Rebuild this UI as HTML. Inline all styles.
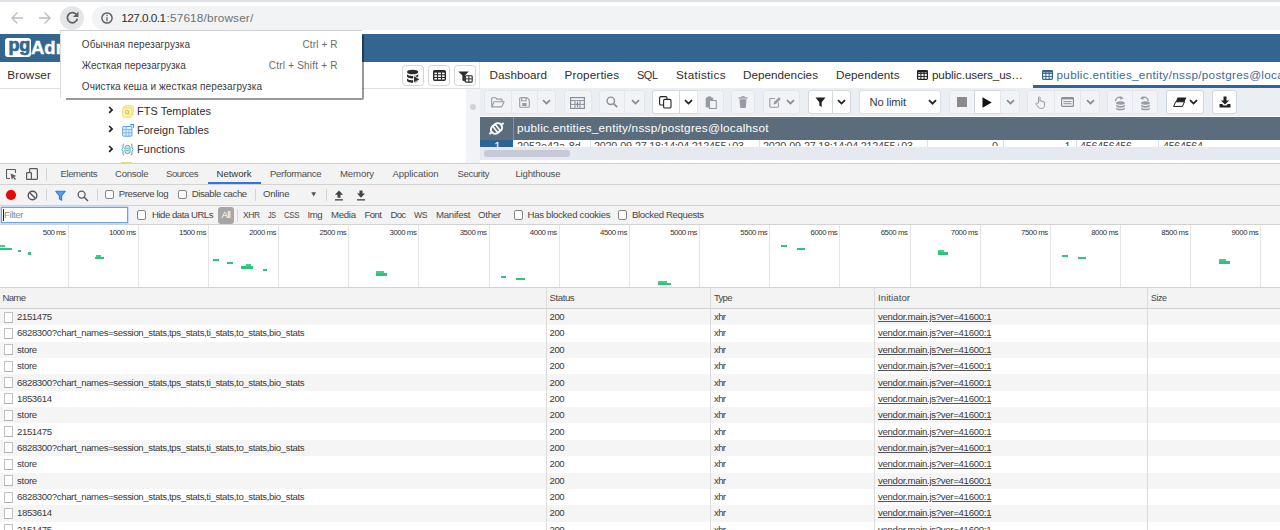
<!DOCTYPE html>
<html><head><meta charset="utf-8"><title>pgAdmin 4</title>
<style>
html,body{margin:0;padding:0;overflow:hidden;}
html{width:1280px;height:530px;}
body{width:1280px;height:530px;position:relative;overflow:hidden;background:#fff;font-family:"Liberation Sans", sans-serif;}
body>div,body>span,body>svg{position:absolute;display:block;}
body>span{white-space:pre;}
</style></head><body>
<div style="left:0px;top:0px;width:1280px;height:2.3px;background:#dee1e6;"></div>
<div style="left:0px;top:2.3px;width:1280px;height:31.7px;background:#ffffff;"></div>
<svg style="left:9px;top:10px;" width="16" height="16" viewBox="0 0 16 16"><path d="M14 7.3H4.7l4.2-4.2L8 2 2 8l6 6 .9-1.1-4.2-4.2H14z" fill="#bcbdbf"/></svg>
<svg style="left:37px;top:10px;" width="16" height="16" viewBox="0 0 16 16"><path d="M2 7.3h9.3L7.1 3.1 8 2l6 6-6 6-.9-1.1 4.2-4.2H2z" fill="#bcbdbf"/></svg>
<div style="left:60px;top:6px;width:24px;height:24px;background:#e5e6e7;border-radius:12px;"></div>
<svg style="left:64.8px;top:10.4px;" width="15" height="15" viewBox="0 0 16 16"><path d="M12.400 5.200A5.400 5.400 0 1 0 13.200 9.400" fill="none" stroke="#5f6368" stroke-width="1.900"/><path d="M14.300 1.600v5.800H8.500z" fill="#5f6368"/></svg>
<div style="left:92px;top:6px;width:1188px;height:24px;background:#f1f3f4;border-radius:12px 0 0 12px;"></div>
<svg style="left:99.6px;top:10.9px;" width="14" height="14" viewBox="0 0 14 14"><circle cx="7" cy="7" r="5.100" fill="none" stroke="#5f6368" stroke-width="1.500"/><rect x="6.35" y="6.2" width="1.3" height="4" fill="#5f6368"/><rect x="6.35" y="3.8" width="1.3" height="1.4" fill="#5f6368"/></svg>
<span style="top:10px;font-size:11.8px;line-height:17px;color:#303134;left:121.20px;letter-spacing:-0.550px;">127.0.0.1</span>
<span style="top:10px;font-size:11.8px;line-height:17px;color:#6e7276;left:166.60px;letter-spacing:0.142px;">:57618/browser/</span>
<div style="left:0px;top:33.75px;width:1280px;height:28.15px;background:#326690;"></div>
<div style="left:5px;top:37.5px;width:25.5px;height:19.5px;background:#ffffff;border-radius:3px;"></div>
<span style="top:33px;font-size:18px;line-height:25px;color:#326690;left:8.40px;font-weight:700;letter-spacing:-0.200px;-webkit-text-stroke:.7px #326690;">pg</span>
<span style="top:35px;font-size:18.5px;line-height:26px;color:#ffffff;left:31.00px;font-weight:700;-webkit-text-stroke:.4px #fff;">Admin</span>
<div style="left:0px;top:61.5px;width:480px;height:27px;background:#ffffff;"></div>
<div style="left:0px;top:88px;width:480px;height:1px;background:#dde0e6;"></div>
<span style="top:67px;font-size:11.7px;line-height:16px;color:#2e2e2e;left:7.30px;letter-spacing:0.121px;">Browser</span>
<div style="left:402.2px;top:65.3px;width:21.8px;height:20.4px;background:#ffffff;border:1px solid #d3d5da;border-radius:3.500px;box-sizing:border-box;"></div>
<div style="left:428.2px;top:65.3px;width:21.8px;height:20.4px;background:#ffffff;border:1px solid #d3d5da;border-radius:3.500px;box-sizing:border-box;"></div>
<div style="left:454px;top:65.3px;width:21.8px;height:20.4px;background:#ffffff;border:1px solid #d3d5da;border-radius:3.500px;box-sizing:border-box;"></div>
<svg style="left:406px;top:69px;" width="15" height="15" viewBox="0 0 15 15"><ellipse cx="6.600" cy="3" rx="5.600" ry="2.300" fill="#2b2b2b"/><path d="M1 4.700c0 3 11.200 3 11.200 0v2.500c0 3-11.200 3-11.200 0zM1 9c0 3 11.200 3 11.200 0v2.400c0 3-11.200 3-11.200 0z" fill="#2b2b2b"/><path d="M7.600 6.600l6.600 3.700-6.600 3.700z" fill="#2b2b2b" stroke="#fff" stroke-width=".9"/></svg>
<svg style="left:432.9px;top:69.8px;" width="13" height="11" viewBox="0 0 13 11"><rect x=".7" y=".7" width="11.600" height="9.600" rx="1.200" fill="#fff" stroke="#2b2b2b" stroke-width="1.400"/><path d="M.7 1.600h11.600" stroke="#2b2b2b" stroke-width="2"/><path d="M.7 4.700h11.600M.7 7.500h11.600M4.500 1v9.500M8.500 1v9.500" stroke="#2b2b2b" stroke-width="1.100"/></svg>
<svg style="left:457.8px;top:70.8px;" width="15" height="12" viewBox="0 0 15 12"><path d="M.3 .4h10.400L6.900 4.600v6L4.400 9.400V4.600z" fill="#2b2b2b"/><rect x="7.400" y="4.700" width="6.800" height="6.400" rx=".8" fill="#fff" stroke="#2b2b2b" stroke-width="1.100"/><path d="M7.400 7.900h6.800M10.800 4.700v6.400" stroke="#2b2b2b" stroke-width="1"/></svg>
<div style="left:479.3px;top:61.9px;width:1px;height:101px;background:#e6e8ec;"></div>
<div style="left:0px;top:89px;width:466px;height:74px;background:#ffffff;"></div>
<div style="left:466.25px;top:89px;width:13.5px;height:74px;background:#f2f3f7;"></div>
<div style="left:469.5px;top:104px;width:6px;height:6px;background:#cfd2d8;border-radius:3px;"></div>
<svg style="left:108px;top:106.39999999999999px;" width="6" height="8" viewBox="0 0 6 8"><path d="M1.100 1l3 2.900L1.100 6.800" fill="none" stroke="#222" stroke-width="1.700"/></svg>
<span style="top:104px;font-size:10.9px;line-height:15px;color:#2e2e2e;left:137.00px;letter-spacing:0.079px;">FTS Templates</span>
<svg style="left:108px;top:125.39999999999999px;" width="6" height="8" viewBox="0 0 6 8"><path d="M1.100 1l3 2.900L1.100 6.800" fill="none" stroke="#222" stroke-width="1.700"/></svg>
<span style="top:123px;font-size:10.9px;line-height:15px;color:#2e2e2e;left:137.00px;letter-spacing:0.058px;">Foreign Tables</span>
<svg style="left:108px;top:144.8px;" width="6" height="8" viewBox="0 0 6 8"><path d="M1.100 1l3 2.900L1.100 6.800" fill="none" stroke="#222" stroke-width="1.700"/></svg>
<span style="top:142px;font-size:10.9px;line-height:15px;color:#2e2e2e;left:137.00px;letter-spacing:0.098px;">Functions</span>
<svg style="left:122px;top:104.5px;" width="12" height="13" viewBox="0 0 12 13"><rect x="2.2" y=".7" width="9" height="9.4" rx="1.5" fill="#fcf5ad" stroke="#ebdf78" stroke-width="1"/><rect x=".7" y="2.6" width="9" height="9.6" rx="1.5" fill="#fcf5ad" stroke="#ebdf78" stroke-width="1"/><circle cx="5" cy="7" r="1.7" fill="none" stroke="#d8b93a" stroke-width=".9"/><path d="M6.2 8.3l1.5 1.6" stroke="#d8b93a" stroke-width=".9"/></svg>
<svg style="left:122px;top:124px;" width="12" height="13" viewBox="0 0 12 13"><rect x=".7" y="2.400" width="9.200" height="9.800" rx="1" fill="#e2f0ff" stroke="#5a9fe6" stroke-width="1"/><path d="M.7 5.600h9.200M.7 8.800h9.200M4 2.400v9.800M7 5.600v6.600" stroke="#6aa9ea" stroke-width=".8"/><path d="M8.200 .6h3.200v3.200" fill="none" stroke="#3d8fe0" stroke-width="1.100"/></svg>
<svg style="left:121px;top:142.5px;" width="13" height="13" viewBox="0 0 13 13"><path d="M3 .8C1.6 .8 2.2 3.2 2 4.6 1.9 5.6 .8 6 .8 6.5s1.1.9 1.2 1.9c.2 1.4-.4 3.8 1 3.8M10 .8c1.4 0 .8 2.4 1 3.8.1 1 1.2 1.4 1.2 1.9s-1.1.9-1.2 1.9c-.2 1.4.4 3.8-1 3.800" fill="none" stroke="#3d9aa8" stroke-width="1"/><rect x="4" y="2.4" width="5" height="8.2" rx="2.3" fill="#d6f1f4" stroke="#3d9aa8" stroke-width=".9"/><path d="M5.3 5.3h2.4M5.3 7.6h2.4" stroke="#3d9aa8" stroke-width=".8"/></svg>
<div style="left:121px;top:161.6px;width:11px;height:1.4px;background:#dfe27a;"></div>
<div style="left:480px;top:61.5px;width:800px;height:26.5px;background:#ffffff;"></div>
<span style="top:67px;font-size:11.7px;line-height:16px;color:#2e2e2e;left:489.50px;letter-spacing:0.039px;">Dashboard</span>
<span style="top:67px;font-size:11.7px;line-height:16px;color:#2e2e2e;left:564.50px;letter-spacing:0.135px;">Properties</span>
<span style="top:67px;font-size:11.7px;line-height:16px;color:#2e2e2e;left:637.00px;letter-spacing:-0.450px;transform:scaleX(0.9337);transform-origin:0 50%;">SQL</span>
<span style="top:67px;font-size:11.7px;line-height:16px;color:#2e2e2e;left:676.00px;letter-spacing:0.304px;">Statistics</span>
<span style="top:67px;font-size:11.7px;line-height:16px;color:#2e2e2e;left:743.00px;letter-spacing:0.024px;">Dependencies</span>
<span style="top:67px;font-size:11.7px;line-height:16px;color:#2e2e2e;left:836.00px;letter-spacing:0.050px;">Dependents</span>
<svg style="left:917px;top:70px;" width="11" height="10" viewBox="0 0 11 10"><rect x=".6" y=".6" width="9.800" height="8.800" rx=".8" fill="none" stroke="#222" stroke-width="1.200"/><path d="M.6 1.500h9.800" stroke="#222" stroke-width="1.900"/><path d="M.6 3.4h9.8M.6 6.4h9.8M3.9 .6v8.800M7.1 .6v8.8" stroke="#222" stroke-width="1"/></svg>
<span style="top:67px;font-size:11.7px;line-height:16px;color:#2e2e2e;left:932.00px;letter-spacing:-0.127px;">public.users_us…</span>
<svg style="left:1041.5px;top:70px;" width="11" height="10" viewBox="0 0 11 10"><rect x=".6" y=".6" width="9.800" height="8.800" rx=".8" fill="none" stroke="#326690" stroke-width="1.200"/><path d="M.6 1.500h9.800" stroke="#326690" stroke-width="1.900"/><path d="M.6 3.4h9.8M.6 6.4h9.8M3.9 .6v8.800M7.1 .6v8.8" stroke="#326690" stroke-width="1"/></svg>
<span style="top:67px;font-size:11.7px;line-height:16px;color:#3a6c95;left:1056.50px;letter-spacing:0.316px;">public.entities_entity/nssp/postgres@localhsot</span>
<div style="left:1032.5px;top:85.1px;width:248px;height:3px;background:#326690;"></div>
<div style="left:480px;top:88.2px;width:800px;height:28.3px;background:#ebeef3;"></div>
<div style="left:484.2px;top:90.2px;width:27.8px;height:24.3px;background:#f1f3f7;border:1px solid #e3e6eb;box-sizing:border-box;border-radius:3px 0px 0px 3px;"></div>
<div style="left:510.7px;top:90.2px;width:27.3px;height:24.3px;background:#f1f3f7;border:1px solid #e3e6eb;box-sizing:border-box;border-radius:0px 0px 0px 0px;"></div>
<div style="left:536.7px;top:90.2px;width:19.6px;height:24.3px;background:#f1f3f7;border:1px solid #e3e6eb;box-sizing:border-box;border-radius:0px 3px 3px 0px;"></div>
<svg style="left:491px;top:96.5px;" width="14" height="11" viewBox="0 0 14 11"><path d="M.7 9.8V1.6c0-.5.4-.9.900-.9h3l1.200 1.400h4.400c.5 0 .9.4.9.900v1.200M.8 9.900l2.300-5.200h10l-2.300 5.200z" fill="none" stroke="#979ba3" stroke-width="1.1" stroke-linejoin="round"/></svg>
<svg style="left:518.5px;top:96.5px;" width="11" height="11" viewBox="0 0 11 11"><path d="M.7 1.600c0-.5.4-.9.900-.9h6.400l2.300 2.300v6.400c0 .5-.4.9-.9.900H1.600c-.5 0-.9-.4-.9-.9z" fill="none" stroke="#979ba3" stroke-width="1.1"/><rect x="2.600" y=".8" width="4.600" height="3" fill="none" stroke="#979ba3" stroke-width="1"/><rect x="3.200" y="6" width="4.400" height="3" fill="#979ba3"/></svg>
<svg style="left:542px;top:99px;" width="9" height="6" viewBox="0 0 9 6"><path d="M1 1.200l3.500 3.400L8 1.200" fill="none" stroke="#878c94" stroke-width="1.800"/></svg>
<div style="left:563.7px;top:90.2px;width:28.6px;height:24.3px;background:#f1f3f7;border:1px solid #e3e6eb;box-sizing:border-box;border-radius:3px 3px 3px 3px;"></div>
<svg style="left:570px;top:96.5px;" width="15" height="12" viewBox="0 0 15 12"><rect x=".6" y=".6" width="13.800" height="10.800" fill="none" stroke="#8b9098" stroke-width="1.2"/><path d="M.6 3.600h13.800M.6 7.400h13.800M5 3.600v7.800M10 3.600v7.800" stroke="#8b9098" stroke-width="1"/><path d="M7.500 4.800v5.400M5.600 7.400h3.800" stroke="#8b9098" stroke-width="1.200"/></svg>
<div style="left:599.2px;top:90.2px;width:26.3px;height:24.3px;background:#f1f3f7;border:1px solid #e3e6eb;box-sizing:border-box;border-radius:3px 0px 0px 3px;"></div>
<div style="left:624.2px;top:90.2px;width:21.1px;height:24.3px;background:#f1f3f7;border:1px solid #e3e6eb;box-sizing:border-box;border-radius:0px 3px 3px 0px;"></div>
<svg style="left:606px;top:96px;" width="12" height="12" viewBox="0 0 12 12"><circle cx="4.800" cy="4.800" r="3.700" fill="none" stroke="#8b9098" stroke-width="1.400"/><path d="M7.600 7.600l3.600 3.600" stroke="#8b9098" stroke-width="1.700"/></svg>
<svg style="left:630.5px;top:99px;" width="9" height="6" viewBox="0 0 9 6"><path d="M1 1.200l3.500 3.400L8 1.200" fill="none" stroke="#878c94" stroke-width="1.800"/></svg>
<div style="left:651.7px;top:90.2px;width:28.3px;height:24.3px;background:#ffffff;border:1px solid #d3d7de;box-sizing:border-box;border-radius:3px 0px 0px 3px;"></div>
<div style="left:678.7px;top:90.2px;width:19.8px;height:24.3px;background:#ffffff;border:1px solid #d3d7de;box-sizing:border-box;border-radius:0px 0px 0px 0px;"></div>
<div style="left:697.2px;top:90.2px;width:27.1px;height:24.3px;background:#f1f3f7;border:1px solid #e3e6eb;box-sizing:border-box;border-radius:0px 3px 3px 0px;"></div>
<svg style="left:659.2px;top:96px;" width="13" height="13" viewBox="0 0 13 13"><rect x=".6" y=".6" width="7.400" height="8.400" rx="1.300" fill="#fff" stroke="#222" stroke-width="1.100"/><rect x="4.600" y="3.400" width="7.400" height="8.600" rx="1.300" fill="#fff" stroke="#222" stroke-width="1.100"/></svg>
<svg style="left:684px;top:99px;" width="9" height="6" viewBox="0 0 9 6"><path d="M1 1.200l3.500 3.400L8 1.200" fill="none" stroke="#222222" stroke-width="1.800"/></svg>
<svg style="left:705px;top:95.5px;" width="12" height="13" viewBox="0 0 12 13"><rect x=".7" y="1.500" width="7.500" height="10" rx="1" fill="#979ba3"/><rect x="4.500" y="4.500" width="6.800" height="8" fill="#f1f3f7" stroke="#979ba3" stroke-width="1.100"/><rect x="2.600" y=".4" width="3.600" height="2" fill="#979ba3"/></svg>
<div style="left:730.7px;top:90.2px;width:24.6px;height:24.3px;background:#f1f3f7;border:1px solid #e3e6eb;box-sizing:border-box;border-radius:3px 3px 3px 3px;"></div>
<svg style="left:738px;top:96px;" width="10" height="12" viewBox="0 0 10 12"><path d="M1.500 3.200h7l-.6 8c0 .4-.4.700-.8.700H2.900c-.4 0-.8-.3-.8-.7z" fill="#979ba3"/><rect x=".5" y="1.300" width="9" height="1.300" fill="#979ba3"/><rect x="3.300" y=".2" width="3.400" height="1.400" fill="#979ba3"/></svg>
<div style="left:762.7px;top:90.2px;width:37.6px;height:24.3px;background:#f1f3f7;border:1px solid #e3e6eb;box-sizing:border-box;border-radius:3px 3px 3px 3px;"></div>
<svg style="left:769px;top:96px;" width="12" height="12" viewBox="0 0 12 12"><path d="M9.500 6.500v3.800c0 .5-.4.900-.9.900H1.700c-.5 0-.9-.4-.9-.9V3.400c0-.5.4-.9.900-.9h4.300" fill="none" stroke="#979ba3" stroke-width="1.100"/><path d="M4.500 8.500l.5-2.400L10 1.200l1.800 1.800-4.900 5z" fill="#979ba3"/></svg>
<svg style="left:785.5px;top:99px;" width="9" height="6" viewBox="0 0 9 6"><path d="M1 1.200l3.500 3.400L8 1.200" fill="none" stroke="#878c94" stroke-width="1.800"/></svg>
<div style="left:807.7px;top:90.2px;width:25.3px;height:24.3px;background:#ffffff;border:1px solid #d3d7de;box-sizing:border-box;border-radius:3px 0px 0px 3px;"></div>
<div style="left:831.7px;top:90.2px;width:19.1px;height:24.3px;background:#ffffff;border:1px solid #d3d7de;box-sizing:border-box;border-radius:0px 3px 3px 0px;"></div>
<svg style="left:814.5px;top:96.5px;" width="11" height="11" viewBox="0 0 11 11"><path d="M.5 .6h10L6.700 5.200V10L4.300 8.600V5.200z" fill="#222"/></svg>
<svg style="left:837px;top:99px;" width="9" height="6" viewBox="0 0 9 6"><path d="M1 1.200l3.500 3.400L8 1.200" fill="none" stroke="#222222" stroke-width="1.800"/></svg>
<div style="left:858.7px;top:90.2px;width:82.6px;height:24.3px;background:#ffffff;border:1px solid #dde0e6;box-sizing:border-box;border-radius:3px;"></div>
<span style="top:94px;font-size:11.2px;line-height:16px;color:#333840;left:869.50px;letter-spacing:-0.114px;">No limit</span>
<svg style="left:928px;top:99px;" width="9" height="6" viewBox="0 0 9 6"><path d="M1 1.200l3.500 3.500L8 1.200" fill="none" stroke="#222" stroke-width="1.800"/></svg>
<div style="left:948.7px;top:90.2px;width:26.3px;height:24.3px;background:#f1f3f7;border:1px solid #e3e6eb;box-sizing:border-box;border-radius:3px 0px 0px 3px;"></div>
<div style="left:973.7px;top:90.2px;width:27.8px;height:24.3px;background:#ffffff;border:1px solid #d3d7de;box-sizing:border-box;border-radius:0px 0px 0px 0px;"></div>
<div style="left:1000.2px;top:90.2px;width:20.1px;height:24.3px;background:#f1f3f7;border:1px solid #e3e6eb;box-sizing:border-box;border-radius:0px 3px 3px 0px;"></div>
<div style="left:956.5px;top:97px;width:10px;height:10px;background:#8a8a8a;"></div>
<svg style="left:982px;top:96.5px;" width="10" height="11" viewBox="0 0 10 11"><path d="M.5 .3l9.200 5.200L.5 10.700z" fill="#111"/></svg>
<svg style="left:1006px;top:99px;" width="9" height="6" viewBox="0 0 9 6"><path d="M1 1.200l3.500 3.400L8 1.200" fill="none" stroke="#878c94" stroke-width="1.800"/></svg>
<div style="left:1027.2px;top:90.2px;width:27.8px;height:24.3px;background:#f1f3f7;border:1px solid #e3e6eb;box-sizing:border-box;border-radius:3px 0px 0px 3px;"></div>
<div style="left:1053.7px;top:90.2px;width:27.8px;height:24.3px;background:#f1f3f7;border:1px solid #e3e6eb;box-sizing:border-box;border-radius:0px 0px 0px 0px;"></div>
<div style="left:1080.2px;top:90.2px;width:19.6px;height:24.3px;background:#f1f3f7;border:1px solid #e3e6eb;box-sizing:border-box;border-radius:0px 3px 3px 0px;"></div>
<svg style="left:1035px;top:95.5px;" width="11" height="13" viewBox="0 0 11 13"><path d="M3.500 7V1.600c0-1 1.500-1 1.500 0v3.600c0-.9 1.500-.9 1.500 0v.5c0-.9 1.500-.9 1.500 0v.5c0-.8 1.500-.8 1.500 0v3.300c0 1.700-1 2.900-2.600 2.900H5.600c-1.100 0-1.800-.5-2.400-1.400L1 8.200c-.5-.8.500-1.500 1.200-.8z" fill="none" stroke="#979ba3" stroke-width="1"/></svg>
<svg style="left:1061px;top:97px;" width="13" height="10" viewBox="0 0 13 10"><rect x=".6" y=".6" width="11.800" height="8.800" rx="1" fill="none" stroke="#8b9098" stroke-width="1.200"/><path d="M.6 1.500h11.800" stroke="#8b9098" stroke-width="1.800"/><path d="M2.500 4.600h8M2.500 6.700h8" stroke="#8b9098" stroke-width="1"/></svg>
<svg style="left:1086px;top:99px;" width="9" height="6" viewBox="0 0 9 6"><path d="M1 1.200l3.500 3.400L8 1.200" fill="none" stroke="#878c94" stroke-width="1.800"/></svg>
<div style="left:1107.2px;top:90.2px;width:26.3px;height:24.3px;background:#f1f3f7;border:1px solid #e3e6eb;box-sizing:border-box;border-radius:3px 0px 0px 3px;"></div>
<div style="left:1132.2px;top:90.2px;width:26.1px;height:24.3px;background:#f1f3f7;border:1px solid #e3e6eb;box-sizing:border-box;border-radius:0px 3px 3px 0px;"></div>
<svg style="left:1112.8px;top:94.6px;" width="15" height="16" viewBox="0 0 13 14"><ellipse cx="6.500" cy="7" rx="3.800" ry="1.500" fill="#979ba3"/><path d="M2.700 8.200c0 1.800 7.600 1.800 7.600 0v1.500c0 1.800-7.600 1.800-7.600 0zM2.700 10.700c0 1.800 7.600 1.800 7.600 0v1.300c0 1.800-7.600 1.800-7.600 0z" fill="#979ba3"/><path d="M2 5.500C2 2.500 5 1.200 7.500 2.600" fill="none" stroke="#979ba3" stroke-width="1.200"/><path d="M6.600 .8l2.600 2.200-3 1.200z" fill="#979ba3"/></svg>
<svg style="left:1138.2px;top:94.6px;" width="15" height="16" viewBox="0 0 13 14"><ellipse cx="6.500" cy="7" rx="3.800" ry="1.500" fill="#979ba3"/><path d="M2.700 8.200c0 1.800 7.600 1.800 7.600 0v1.500c0 1.800-7.600 1.800-7.600 0zM2.700 10.700c0 1.800 7.600 1.800 7.600 0v1.300c0 1.800-7.600 1.800-7.600 0z" fill="#979ba3"/><path d="M9 5.500C9 2.500 6 1.200 3.500 2.600" fill="none" stroke="#979ba3" stroke-width="1.200"/><path d="M4.400 .8L1.800 3l3 1.200z" fill="#979ba3"/></svg>
<div style="left:1165.7px;top:90.2px;width:38.1px;height:24.3px;background:#ffffff;border:1px solid #d3d7de;box-sizing:border-box;border-radius:3px 3px 3px 3px;"></div>
<svg style="left:1172.5px;top:97px;" width="14" height="10" viewBox="0 0 14 10"><path d="M4.600 .6h8.800L9.400 9.400H.6z" fill="#222"/><path d="M2.700 4.800h8.800L9.400 9.400H.6z" fill="#fff" stroke="#222" stroke-width="1"/></svg>
<svg style="left:1189px;top:99px;" width="9" height="6" viewBox="0 0 9 6"><path d="M1 1.200l3.500 3.400L8 1.200" fill="none" stroke="#222222" stroke-width="1.800"/></svg>
<div style="left:1211.7px;top:90.2px;width:25.6px;height:24.3px;background:#ffffff;border:1px solid #d3d7de;box-sizing:border-box;border-radius:3px 3px 3px 3px;"></div>
<svg style="left:1218.5px;top:96px;" width="12" height="12" viewBox="0 0 12 12"><path d="M4.500 .4h3v4h2.600L6 8.600 1.900 4.400h2.600z" fill="#222"/><path d="M.5 8h2.700l1.400 1.500h2.800L8.800 8h2.700v3.600H.5z" fill="#222"/></svg>
<div style="left:480px;top:116.5px;width:800px;height:23.5px;background:#5b6d7c;"></div>
<div style="left:512.5px;top:116.5px;width:1px;height:23.5px;background:#8493a0;"></div>
<svg style="left:487.3px;top:118.7px;" width="19" height="19" viewBox="0 0 16 16"><g transform="rotate(-38 8 8)" fill="none" stroke="#fff"><rect x="3" y="4.500" width="10" height="7" rx="3.500" stroke-width="1.700"/><path d="M6.700 4.500v7M9.300 4.500v7" stroke-width="1.300"/><path d="M.4 8h2.600M13 8h2.600" stroke-width="1.500"/></g></svg>
<span style="top:120px;font-size:11.8px;line-height:17px;color:#ffffff;left:517.00px;letter-spacing:0.222px;">public.entities_entity/nssp/postgres@localhsot</span>
<div style="left:480px;top:140px;width:800px;height:7px;background:#ffffff;"></div>
<div style="left:480px;top:140px;width:32.5px;height:7px;background:#2c6496;"></div>
<span style="top:139px;font-size:12px;line-height:17px;color:#ffffff;left:494.00px;clip-path:inset(0 0 8px 0);">1</span>
<span style="top:139px;font-size:10.8px;line-height:15px;color:#444;left:517.00px;clip-path:inset(0 0 8px 0);">2052e42a-8d</span>
<span style="top:139px;font-size:10.8px;line-height:15px;color:#444;left:594.00px;letter-spacing:-0.272px;clip-path:inset(0 0 8px 0);">2020-09-27 18:14:04.212455+03</span>
<span style="top:139px;font-size:10.8px;line-height:15px;color:#444;left:763.00px;letter-spacing:-0.272px;clip-path:inset(0 0 8px 0);">2020-09-27 18:14:04.212455+03</span>
<span style="top:139px;font-size:10.8px;line-height:15px;color:#444;right:282.00px;clip-path:inset(0 0 8px 0);">0</span>
<span style="top:139px;font-size:10.8px;line-height:15px;color:#444;right:209.50px;clip-path:inset(0 0 8px 0);">1</span>
<span style="top:139px;font-size:10.8px;line-height:15px;color:#444;left:1080.00px;letter-spacing:-0.256px;clip-path:inset(0 0 8px 0);">456456456</span>
<span style="top:139px;font-size:10.8px;line-height:15px;color:#444;left:1163.00px;letter-spacing:-0.341px;clip-path:inset(0 0 8px 0);">4564564</span>
<div style="left:589.5px;top:140px;width:1px;height:7px;background:#dde0e6;"></div>
<div style="left:758.5px;top:140px;width:1px;height:7px;background:#dde0e6;"></div>
<div style="left:927px;top:140px;width:1px;height:7px;background:#dde0e6;"></div>
<div style="left:1003px;top:140px;width:1px;height:7px;background:#dde0e6;"></div>
<div style="left:1075.5px;top:140px;width:1px;height:7px;background:#dde0e6;"></div>
<div style="left:1157.5px;top:140px;width:1px;height:7px;background:#dde0e6;"></div>
<div style="left:480px;top:146.5px;width:800px;height:13.2px;background:#e6e9f0;"></div>
<div style="left:483.75px;top:150.2px;width:86.25px;height:6.4px;background:#c5cad6;border-radius:3.200px;"></div>
<div style="left:480px;top:159.7px;width:800px;height:3.5px;background:#ffffff;"></div>
<div style="left:0px;top:163px;width:1280px;height:1px;background:#d2d2d2;"></div>
<div style="left:0px;top:164px;width:1280px;height:21px;background:#f3f3f3;"></div>
<div style="left:0px;top:183.6px;width:1280px;height:1px;background:#d2d2d2;"></div>
<div style="left:0px;top:185px;width:1280px;height:20px;background:#f3f3f3;"></div>
<div style="left:0px;top:205px;width:1280px;height:1px;background:#d2d2d2;"></div>
<div style="left:0px;top:206px;width:1280px;height:18px;background:#f3f3f3;"></div>
<div style="left:0px;top:224px;width:1280px;height:1px;background:#d2d2d2;"></div>
<svg style="left:6px;top:169px;" width="11" height="11" viewBox="0 0 11 11"><path d="M9.500 4V1.200c0-.4-.3-.700-.700-.700H1.200c-.4 0-.7.300-.7.700v7.600c0 .4.300.7.700.7H4" fill="none" stroke="#5a5a5a" stroke-width="1.100"/><path d="M4.500 4.500l6 2.400-2.500.9 2 2.200-1 .9-2-2.300-1.100 2.300z" fill="#5a5a5a"/></svg>
<svg style="left:26px;top:168px;" width="12" height="12" viewBox="0 0 12 12"><rect x="3.600" y=".6" width="7.800" height="10.800" rx=".8" fill="none" stroke="#5a5a5a" stroke-width="1.200"/><rect x=".6" y="4.600" width="4.800" height="6.800" rx=".6" fill="#f3f3f3" stroke="#5a5a5a" stroke-width="1.200"/></svg>
<div style="left:46.3px;top:168px;width:1px;height:12.5px;background:#d4d4d4;"></div>
<span style="top:167px;font-size:9.6px;line-height:13px;color:#505050;left:60.50px;letter-spacing:-0.429px;">Elements</span>
<span style="top:167px;font-size:9.6px;line-height:13px;color:#505050;left:115.00px;letter-spacing:-0.284px;">Console</span>
<span style="top:167px;font-size:9.6px;line-height:13px;color:#505050;left:166.00px;letter-spacing:-0.451px;">Sources</span>
<span style="top:167px;font-size:9.6px;line-height:13px;color:#333;left:216.50px;letter-spacing:-0.031px;">Network</span>
<span style="top:167px;font-size:9.6px;line-height:13px;color:#505050;left:270.00px;letter-spacing:-0.342px;">Performance</span>
<span style="top:167px;font-size:9.6px;line-height:13px;color:#505050;left:340.00px;letter-spacing:-0.131px;">Memory</span>
<span style="top:167px;font-size:9.6px;line-height:13px;color:#505050;left:392.50px;letter-spacing:-0.094px;">Application</span>
<span style="top:167px;font-size:9.6px;line-height:13px;color:#505050;left:457.50px;letter-spacing:-0.379px;">Security</span>
<span style="top:167px;font-size:9.6px;line-height:13px;color:#505050;left:515.50px;letter-spacing:-0.217px;">Lighthouse</span>
<div style="left:208px;top:182.1px;width:53px;height:2px;background:#2d78e0;"></div>
<div style="left:6.2px;top:190.3px;width:9.4px;height:9.4px;background:#e20a0a;border-radius:50%;"></div>
<svg style="left:27px;top:189.5px;" width="11" height="11" viewBox="0 0 11 11"><circle cx="5.500" cy="5.500" r="4.300" fill="none" stroke="#555" stroke-width="1.400"/><path d="M2.500 2.500l6 6" stroke="#555" stroke-width="1.400"/></svg>
<div style="left:46.3px;top:188.5px;width:1px;height:12.5px;background:#d4d4d4;"></div>
<svg style="left:55px;top:190px;" width="11" height="11" viewBox="0 0 11 11"><path d="M.8 1.300h9.400L6.600 5.600v4.600L4.400 8.800V5.600z" fill="#5d9df0" stroke="#2f7de1" stroke-width="1.100" stroke-linejoin="round"/></svg>
<svg style="left:77px;top:189.5px;" width="12" height="12" viewBox="0 0 12 12"><circle cx="4.600" cy="4.600" r="3.500" fill="none" stroke="#5a5a5a" stroke-width="1.300"/><path d="M7.200 7.200l3.800 3.800" stroke="#5a5a5a" stroke-width="1.500"/></svg>
<div style="left:96.5px;top:188.5px;width:1px;height:12.5px;background:#d4d4d4;"></div>
<div style="left:105.2px;top:190.3px;width:9.2px;height:9.2px;background:#fff;border:1px solid #858585;box-sizing:border-box;border-radius:2px;"></div>
<span style="top:187px;font-size:9.6px;line-height:13px;color:#484848;left:118.70px;letter-spacing:-0.351px;">Preserve log</span>
<div style="left:177.7px;top:190.3px;width:9.2px;height:9.2px;background:#fff;border:1px solid #858585;box-sizing:border-box;border-radius:2px;"></div>
<span style="top:187px;font-size:9.6px;line-height:13px;color:#484848;left:191.70px;letter-spacing:-0.397px;">Disable cache</span>
<div style="left:254.8px;top:188.5px;width:1px;height:12.5px;background:#d4d4d4;"></div>
<span style="top:187px;font-size:9.6px;line-height:13px;color:#484848;left:263.00px;letter-spacing:-0.247px;">Online</span>
<svg style="left:311.3px;top:191.9px;" width="6" height="5" viewBox="0 0 6 5"><path d="M.3 .2h4.800L2.700 4.400z" fill="#555"/></svg>
<div style="left:325.8px;top:188.5px;width:1px;height:12.5px;background:#d4d4d4;"></div>
<svg style="left:334px;top:190px;" width="10" height="11" viewBox="0 0 10 11"><path d="M5 .5l4 4.300H6.500v3h-3v-3H1z" fill="#444"/><rect x="1" y="9.200" width="8" height="1.300" fill="#444"/></svg>
<svg style="left:356px;top:190px;" width="10" height="11" viewBox="0 0 10 11"><path d="M5 7.800l4-4.300H6.500v-3h-3v3H1z" fill="#444"/><rect x="1" y="9.200" width="8" height="1.300" fill="#444"/></svg>
<div style="left:1px;top:207px;width:127px;height:16px;background:#ffffff;border:1px solid #6ea3e8;box-sizing:border-box;box-shadow:0 0 0 .5px #9fc2f2;"></div>
<div style="left:3px;top:209px;width:1px;height:12px;background:#222;"></div>
<span style="top:208px;font-size:9.6px;line-height:13px;color:#8a8a8a;left:4.00px;letter-spacing:-0.366px;">Filter</span>
<div style="left:137.2px;top:210.4px;width:9.2px;height:9.2px;background:#fff;border:1px solid #858585;box-sizing:border-box;border-radius:2px;"></div>
<span style="top:208px;font-size:9.6px;line-height:13px;color:#484848;left:152.00px;letter-spacing:-0.480px;">Hide data URLs</span>
<div style="left:218px;top:207px;width:16px;height:17px;background:#a6a6a6;border-radius:3px;"></div>
<span style="top:208px;font-size:9.6px;line-height:13px;color:#ffffff;left:221.50px;letter-spacing:-0.586px;">All</span>
<div style="left:236.8px;top:209px;width:1px;height:12.5px;background:#d4d4d4;"></div>
<span style="top:208px;font-size:9.6px;line-height:13px;color:#484848;left:243.00px;letter-spacing:-0.450px;transform:scaleX(0.8778);transform-origin:0 50%;">XHR</span>
<span style="top:208px;font-size:9.6px;line-height:13px;color:#484848;left:268.00px;letter-spacing:-0.450px;transform:scaleX(0.7440);transform-origin:0 50%;">JS</span>
<span style="top:208px;font-size:9.6px;line-height:13px;color:#484848;left:284.00px;letter-spacing:-0.450px;transform:scaleX(0.8230);transform-origin:0 50%;">CSS</span>
<span style="top:208px;font-size:9.6px;line-height:13px;color:#484848;left:307.50px;letter-spacing:-0.500px;">Img</span>
<span style="top:208px;font-size:9.6px;line-height:13px;color:#484848;left:331.00px;letter-spacing:-0.285px;">Media</span>
<span style="top:208px;font-size:9.6px;line-height:13px;color:#484848;left:364.50px;letter-spacing:-0.568px;">Font</span>
<span style="top:208px;font-size:9.6px;line-height:13px;color:#484848;left:390.50px;letter-spacing:-0.781px;">Doc</span>
<span style="top:208px;font-size:9.6px;line-height:13px;color:#484848;left:414.00px;letter-spacing:-0.450px;transform:scaleX(0.8989);transform-origin:0 50%;">WS</span>
<span style="top:208px;font-size:9.6px;line-height:13px;color:#484848;left:436.00px;letter-spacing:-0.252px;">Manifest</span>
<span style="top:208px;font-size:9.6px;line-height:13px;color:#484848;left:478.00px;letter-spacing:-0.250px;">Other</span>
<div style="left:513.8px;top:210.4px;width:9.2px;height:9.2px;background:#fff;border:1px solid #858585;box-sizing:border-box;border-radius:2px;"></div>
<span style="top:208px;font-size:9.6px;line-height:13px;color:#484848;left:527.50px;letter-spacing:-0.278px;">Has blocked cookies</span>
<div style="left:618.3px;top:210.4px;width:9.2px;height:9.2px;background:#fff;border:1px solid #858585;box-sizing:border-box;border-radius:2px;"></div>
<span style="top:208px;font-size:9.6px;line-height:13px;color:#484848;left:632.00px;letter-spacing:-0.355px;">Blocked Requests</span>
<div style="left:0px;top:225px;width:1280px;height:62px;background:#ffffff;"></div>
<div style="left:0px;top:287px;width:1280px;height:1px;background:#d2d2d2;"></div>
<div style="left:67.5px;top:225px;width:1px;height:62px;background:#e4e4e4;"></div>
<span style="top:227px;font-size:7.8px;line-height:11px;color:#333;right:1214.45px;letter-spacing:-0.466px;">500 ms</span>
<div style="left:137.7px;top:225px;width:1px;height:62px;background:#e4e4e4;"></div>
<span style="top:227px;font-size:7.8px;line-height:11px;color:#333;right:1144.29px;letter-spacing:-0.443px;">1000 ms</span>
<div style="left:207.9px;top:225px;width:1px;height:62px;background:#e4e4e4;"></div>
<span style="top:227px;font-size:7.8px;line-height:11px;color:#333;right:1074.13px;letter-spacing:-0.443px;">1500 ms</span>
<div style="left:278.0px;top:225px;width:1px;height:62px;background:#e4e4e4;"></div>
<span style="top:227px;font-size:7.8px;line-height:11px;color:#333;right:1003.97px;letter-spacing:-0.443px;">2000 ms</span>
<div style="left:348.2px;top:225px;width:1px;height:62px;background:#e4e4e4;"></div>
<span style="top:227px;font-size:7.8px;line-height:11px;color:#333;right:933.81px;letter-spacing:-0.443px;">2500 ms</span>
<div style="left:418.3px;top:225px;width:1px;height:62px;background:#e4e4e4;"></div>
<span style="top:227px;font-size:7.8px;line-height:11px;color:#333;right:863.65px;letter-spacing:-0.443px;">3000 ms</span>
<div style="left:488.5px;top:225px;width:1px;height:62px;background:#e4e4e4;"></div>
<span style="top:227px;font-size:7.8px;line-height:11px;color:#333;right:793.49px;letter-spacing:-0.443px;">3500 ms</span>
<div style="left:558.7px;top:225px;width:1px;height:62px;background:#e4e4e4;"></div>
<span style="top:227px;font-size:7.8px;line-height:11px;color:#333;right:723.33px;letter-spacing:-0.443px;">4000 ms</span>
<div style="left:628.8px;top:225px;width:1px;height:62px;background:#e4e4e4;"></div>
<span style="top:227px;font-size:7.8px;line-height:11px;color:#333;right:653.17px;letter-spacing:-0.443px;">4500 ms</span>
<div style="left:699.0px;top:225px;width:1px;height:62px;background:#e4e4e4;"></div>
<span style="top:227px;font-size:7.8px;line-height:11px;color:#333;right:583.01px;letter-spacing:-0.443px;">5000 ms</span>
<div style="left:769.1px;top:225px;width:1px;height:62px;background:#e4e4e4;"></div>
<span style="top:227px;font-size:7.8px;line-height:11px;color:#333;right:512.85px;letter-spacing:-0.443px;">5500 ms</span>
<div style="left:839.3px;top:225px;width:1px;height:62px;background:#e4e4e4;"></div>
<span style="top:227px;font-size:7.8px;line-height:11px;color:#333;right:442.69px;letter-spacing:-0.443px;">6000 ms</span>
<div style="left:909.5px;top:225px;width:1px;height:62px;background:#e4e4e4;"></div>
<span style="top:227px;font-size:7.8px;line-height:11px;color:#333;right:372.53px;letter-spacing:-0.443px;">6500 ms</span>
<div style="left:979.6px;top:225px;width:1px;height:62px;background:#e4e4e4;"></div>
<span style="top:227px;font-size:7.8px;line-height:11px;color:#333;right:302.37px;letter-spacing:-0.443px;">7000 ms</span>
<div style="left:1049.8px;top:225px;width:1px;height:62px;background:#e4e4e4;"></div>
<span style="top:227px;font-size:7.8px;line-height:11px;color:#333;right:232.21px;letter-spacing:-0.443px;">7500 ms</span>
<div style="left:1119.9px;top:225px;width:1px;height:62px;background:#e4e4e4;"></div>
<span style="top:227px;font-size:7.8px;line-height:11px;color:#333;right:162.05px;letter-spacing:-0.443px;">8000 ms</span>
<div style="left:1190.1px;top:225px;width:1px;height:62px;background:#e4e4e4;"></div>
<span style="top:227px;font-size:7.8px;line-height:11px;color:#333;right:91.89px;letter-spacing:-0.443px;">8500 ms</span>
<div style="left:1260.3px;top:225px;width:1px;height:62px;background:#e4e4e4;"></div>
<span style="top:227px;font-size:7.8px;line-height:11px;color:#333;right:21.73px;letter-spacing:-0.443px;">9000 ms</span>
<div style="left:0px;top:244.6px;width:5px;height:2.3px;background:#45cd8b;"></div>
<div style="left:0px;top:247.6px;width:12px;height:2.3px;background:#2fc47c;"></div>
<div style="left:18px;top:249.85px;width:3px;height:2.3px;background:#2fc47c;"></div>
<div style="left:28px;top:252.35px;width:3px;height:2.3px;background:#2fc47c;"></div>
<div style="left:96px;top:254.6px;width:4.5px;height:2.3px;background:#45cd8b;"></div>
<div style="left:95px;top:256.85px;width:9px;height:2.3px;background:#2fc47c;"></div>
<div style="left:213px;top:258.85px;width:6px;height:2.3px;background:#2fc47c;"></div>
<div style="left:227px;top:261.6px;width:5.5px;height:2.3px;background:#2fc47c;"></div>
<div style="left:246px;top:263.85px;width:5px;height:2.3px;background:#45cd8b;"></div>
<div style="left:241px;top:266.35px;width:12px;height:2.3px;background:#2fc47c;"></div>
<div style="left:262.5px;top:268.6px;width:4.5px;height:2.3px;background:#2fc47c;"></div>
<div style="left:376.25px;top:271.25px;width:7.75px;height:2.3px;background:#45cd8b;"></div>
<div style="left:376.25px;top:273.45px;width:10.95px;height:2.3px;background:#2fc47c;"></div>
<div style="left:500.6px;top:275.65px;width:5.65px;height:2.3px;background:#2fc47c;"></div>
<div style="left:516.25px;top:278.15px;width:9.05px;height:2.3px;background:#2fc47c;"></div>
<div style="left:658px;top:280.65px;width:9px;height:2.3px;background:#45cd8b;"></div>
<div style="left:657.5px;top:282.55px;width:13.5px;height:2.3px;background:#2fc47c;"></div>
<div style="left:781.3px;top:244.75px;width:6.1px;height:2.3px;background:#2fc47c;"></div>
<div style="left:796.6px;top:247.65px;width:8.7px;height:2.3px;background:#2fc47c;"></div>
<div style="left:937.7px;top:249.85px;width:6.1px;height:2.3px;background:#45cd8b;"></div>
<div style="left:937.7px;top:252.35px;width:10.3px;height:2.3px;background:#2fc47c;"></div>
<div style="left:1062.25px;top:254.55px;width:5.45px;height:2.3px;background:#2fc47c;"></div>
<div style="left:1077.9px;top:256.75px;width:7.7px;height:2.3px;background:#2fc47c;"></div>
<div style="left:1219px;top:259.45px;width:7.2px;height:2.3px;background:#45cd8b;"></div>
<div style="left:1218.5px;top:261.45px;width:11.3px;height:2.3px;background:#2fc47c;"></div>
<div style="left:0px;top:288px;width:1280px;height:20.5px;background:#f3f3f3;"></div>
<div style="left:0px;top:308.3px;width:1280px;height:1px;background:#d2d2d2;"></div>
<span style="top:291px;font-size:9.6px;line-height:13px;color:#484848;left:2.50px;letter-spacing:-0.698px;">Name</span>
<span style="top:291px;font-size:9.6px;line-height:13px;color:#484848;left:549.60px;letter-spacing:-0.441px;">Status</span>
<span style="top:291px;font-size:9.6px;line-height:13px;color:#484848;left:714.00px;letter-spacing:-0.771px;">Type</span>
<span style="top:291px;font-size:9.6px;line-height:13px;color:#484848;left:878.00px;letter-spacing:0.066px;">Initiator</span>
<span style="top:291px;font-size:9.6px;line-height:13px;color:#484848;left:1151.00px;letter-spacing:-0.450px;transform:scaleX(0.9237);transform-origin:0 50%;">Size</span>
<div style="left:0px;top:309.1px;width:1280px;height:16.34px;background:#f5f5f5;"></div>
<div style="left:4px;top:311.77px;width:9px;height:11px;background:#ffffff;border:1px solid #c2c2c2;border-bottom-color:#b0b0b0;box-sizing:border-box;"></div>
<span style="top:310px;font-size:9.6px;line-height:13px;color:#3a3a3a;left:17.00px;letter-spacing:-0.393px;">2151475</span>
<span style="top:310px;font-size:9.6px;line-height:13px;color:#3a3a3a;left:549.60px;letter-spacing:-0.508px;">200</span>
<span style="top:310px;font-size:9.6px;line-height:13px;color:#3a3a3a;left:714.00px;letter-spacing:-0.664px;">xhr</span>
<span style="top:310px;font-size:9.6px;line-height:13px;color:#3a3a3a;left:878.00px;letter-spacing:-0.292px;text-decoration:underline;text-decoration-color:#555;">vendor.main.js?ver=41600:1</span>
<div style="left:4px;top:328.11px;width:9px;height:11px;background:#ffffff;border:1px solid #c2c2c2;border-bottom-color:#b0b0b0;box-sizing:border-box;"></div>
<span style="top:326px;font-size:9.6px;line-height:13px;color:#3a3a3a;left:17.00px;letter-spacing:-0.369px;">6828300?chart_names=session_stats,tps_stats,ti_stats,to_stats,bio_stats</span>
<span style="top:326px;font-size:9.6px;line-height:13px;color:#3a3a3a;left:549.60px;letter-spacing:-0.508px;">200</span>
<span style="top:326px;font-size:9.6px;line-height:13px;color:#3a3a3a;left:714.00px;letter-spacing:-0.664px;">xhr</span>
<span style="top:326px;font-size:9.6px;line-height:13px;color:#3a3a3a;left:878.00px;letter-spacing:-0.292px;text-decoration:underline;text-decoration-color:#555;">vendor.main.js?ver=41600:1</span>
<div style="left:0px;top:341.78px;width:1280px;height:16.34px;background:#f5f5f5;"></div>
<div style="left:4px;top:344.45px;width:9px;height:11px;background:#ffffff;border:1px solid #c2c2c2;border-bottom-color:#b0b0b0;box-sizing:border-box;"></div>
<span style="top:343px;font-size:9.6px;line-height:13px;color:#3a3a3a;left:17.00px;letter-spacing:-0.286px;">store</span>
<span style="top:343px;font-size:9.6px;line-height:13px;color:#3a3a3a;left:549.60px;letter-spacing:-0.508px;">200</span>
<span style="top:343px;font-size:9.6px;line-height:13px;color:#3a3a3a;left:714.00px;letter-spacing:-0.664px;">xhr</span>
<span style="top:343px;font-size:9.6px;line-height:13px;color:#3a3a3a;left:878.00px;letter-spacing:-0.292px;text-decoration:underline;text-decoration-color:#555;">vendor.main.js?ver=41600:1</span>
<div style="left:4px;top:360.79px;width:9px;height:11px;background:#ffffff;border:1px solid #c2c2c2;border-bottom-color:#b0b0b0;box-sizing:border-box;"></div>
<span style="top:359px;font-size:9.6px;line-height:13px;color:#3a3a3a;left:17.00px;letter-spacing:-0.286px;">store</span>
<span style="top:359px;font-size:9.6px;line-height:13px;color:#3a3a3a;left:549.60px;letter-spacing:-0.508px;">200</span>
<span style="top:359px;font-size:9.6px;line-height:13px;color:#3a3a3a;left:714.00px;letter-spacing:-0.664px;">xhr</span>
<span style="top:359px;font-size:9.6px;line-height:13px;color:#3a3a3a;left:878.00px;letter-spacing:-0.292px;text-decoration:underline;text-decoration-color:#555;">vendor.main.js?ver=41600:1</span>
<div style="left:0px;top:374.46px;width:1280px;height:16.34px;background:#f5f5f5;"></div>
<div style="left:4px;top:377.13px;width:9px;height:11px;background:#ffffff;border:1px solid #c2c2c2;border-bottom-color:#b0b0b0;box-sizing:border-box;"></div>
<span style="top:376px;font-size:9.6px;line-height:13px;color:#3a3a3a;left:17.00px;letter-spacing:-0.369px;">6828300?chart_names=session_stats,tps_stats,ti_stats,to_stats,bio_stats</span>
<span style="top:376px;font-size:9.6px;line-height:13px;color:#3a3a3a;left:549.60px;letter-spacing:-0.508px;">200</span>
<span style="top:376px;font-size:9.6px;line-height:13px;color:#3a3a3a;left:714.00px;letter-spacing:-0.664px;">xhr</span>
<span style="top:376px;font-size:9.6px;line-height:13px;color:#3a3a3a;left:878.00px;letter-spacing:-0.292px;text-decoration:underline;text-decoration-color:#555;">vendor.main.js?ver=41600:1</span>
<div style="left:4px;top:393.47px;width:9px;height:11px;background:#ffffff;border:1px solid #c2c2c2;border-bottom-color:#b0b0b0;box-sizing:border-box;"></div>
<span style="top:392px;font-size:9.6px;line-height:13px;color:#3a3a3a;left:17.00px;letter-spacing:-0.393px;">1853614</span>
<span style="top:392px;font-size:9.6px;line-height:13px;color:#3a3a3a;left:549.60px;letter-spacing:-0.508px;">200</span>
<span style="top:392px;font-size:9.6px;line-height:13px;color:#3a3a3a;left:714.00px;letter-spacing:-0.664px;">xhr</span>
<span style="top:392px;font-size:9.6px;line-height:13px;color:#3a3a3a;left:878.00px;letter-spacing:-0.292px;text-decoration:underline;text-decoration-color:#555;">vendor.main.js?ver=41600:1</span>
<div style="left:0px;top:407.14px;width:1280px;height:16.34px;background:#f5f5f5;"></div>
<div style="left:4px;top:409.81px;width:9px;height:11px;background:#ffffff;border:1px solid #c2c2c2;border-bottom-color:#b0b0b0;box-sizing:border-box;"></div>
<span style="top:408px;font-size:9.6px;line-height:13px;color:#3a3a3a;left:17.00px;letter-spacing:-0.286px;">store</span>
<span style="top:408px;font-size:9.6px;line-height:13px;color:#3a3a3a;left:549.60px;letter-spacing:-0.508px;">200</span>
<span style="top:408px;font-size:9.6px;line-height:13px;color:#3a3a3a;left:714.00px;letter-spacing:-0.664px;">xhr</span>
<span style="top:408px;font-size:9.6px;line-height:13px;color:#3a3a3a;left:878.00px;letter-spacing:-0.292px;text-decoration:underline;text-decoration-color:#555;">vendor.main.js?ver=41600:1</span>
<div style="left:4px;top:426.15px;width:9px;height:11px;background:#ffffff;border:1px solid #c2c2c2;border-bottom-color:#b0b0b0;box-sizing:border-box;"></div>
<span style="top:425px;font-size:9.6px;line-height:13px;color:#3a3a3a;left:17.00px;letter-spacing:-0.393px;">2151475</span>
<span style="top:425px;font-size:9.6px;line-height:13px;color:#3a3a3a;left:549.60px;letter-spacing:-0.508px;">200</span>
<span style="top:425px;font-size:9.6px;line-height:13px;color:#3a3a3a;left:714.00px;letter-spacing:-0.664px;">xhr</span>
<span style="top:425px;font-size:9.6px;line-height:13px;color:#3a3a3a;left:878.00px;letter-spacing:-0.292px;text-decoration:underline;text-decoration-color:#555;">vendor.main.js?ver=41600:1</span>
<div style="left:0px;top:439.82px;width:1280px;height:16.34px;background:#f5f5f5;"></div>
<div style="left:4px;top:442.49px;width:9px;height:11px;background:#ffffff;border:1px solid #c2c2c2;border-bottom-color:#b0b0b0;box-sizing:border-box;"></div>
<span style="top:441px;font-size:9.6px;line-height:13px;color:#3a3a3a;left:17.00px;letter-spacing:-0.369px;">6828300?chart_names=session_stats,tps_stats,ti_stats,to_stats,bio_stats</span>
<span style="top:441px;font-size:9.6px;line-height:13px;color:#3a3a3a;left:549.60px;letter-spacing:-0.508px;">200</span>
<span style="top:441px;font-size:9.6px;line-height:13px;color:#3a3a3a;left:714.00px;letter-spacing:-0.664px;">xhr</span>
<span style="top:441px;font-size:9.6px;line-height:13px;color:#3a3a3a;left:878.00px;letter-spacing:-0.292px;text-decoration:underline;text-decoration-color:#555;">vendor.main.js?ver=41600:1</span>
<div style="left:4px;top:458.83px;width:9px;height:11px;background:#ffffff;border:1px solid #c2c2c2;border-bottom-color:#b0b0b0;box-sizing:border-box;"></div>
<span style="top:457px;font-size:9.6px;line-height:13px;color:#3a3a3a;left:17.00px;letter-spacing:-0.286px;">store</span>
<span style="top:457px;font-size:9.6px;line-height:13px;color:#3a3a3a;left:549.60px;letter-spacing:-0.508px;">200</span>
<span style="top:457px;font-size:9.6px;line-height:13px;color:#3a3a3a;left:714.00px;letter-spacing:-0.664px;">xhr</span>
<span style="top:457px;font-size:9.6px;line-height:13px;color:#3a3a3a;left:878.00px;letter-spacing:-0.292px;text-decoration:underline;text-decoration-color:#555;">vendor.main.js?ver=41600:1</span>
<div style="left:0px;top:472.5px;width:1280px;height:16.34px;background:#f5f5f5;"></div>
<div style="left:4px;top:475.17px;width:9px;height:11px;background:#ffffff;border:1px solid #c2c2c2;border-bottom-color:#b0b0b0;box-sizing:border-box;"></div>
<span style="top:474px;font-size:9.6px;line-height:13px;color:#3a3a3a;left:17.00px;letter-spacing:-0.286px;">store</span>
<span style="top:474px;font-size:9.6px;line-height:13px;color:#3a3a3a;left:549.60px;letter-spacing:-0.508px;">200</span>
<span style="top:474px;font-size:9.6px;line-height:13px;color:#3a3a3a;left:714.00px;letter-spacing:-0.664px;">xhr</span>
<span style="top:474px;font-size:9.6px;line-height:13px;color:#3a3a3a;left:878.00px;letter-spacing:-0.292px;text-decoration:underline;text-decoration-color:#555;">vendor.main.js?ver=41600:1</span>
<div style="left:4px;top:491.51px;width:9px;height:11px;background:#ffffff;border:1px solid #c2c2c2;border-bottom-color:#b0b0b0;box-sizing:border-box;"></div>
<span style="top:490px;font-size:9.6px;line-height:13px;color:#3a3a3a;left:17.00px;letter-spacing:-0.369px;">6828300?chart_names=session_stats,tps_stats,ti_stats,to_stats,bio_stats</span>
<span style="top:490px;font-size:9.6px;line-height:13px;color:#3a3a3a;left:549.60px;letter-spacing:-0.508px;">200</span>
<span style="top:490px;font-size:9.6px;line-height:13px;color:#3a3a3a;left:714.00px;letter-spacing:-0.664px;">xhr</span>
<span style="top:490px;font-size:9.6px;line-height:13px;color:#3a3a3a;left:878.00px;letter-spacing:-0.292px;text-decoration:underline;text-decoration-color:#555;">vendor.main.js?ver=41600:1</span>
<div style="left:0px;top:505.18px;width:1280px;height:16.34px;background:#f5f5f5;"></div>
<div style="left:4px;top:507.85px;width:9px;height:11px;background:#ffffff;border:1px solid #c2c2c2;border-bottom-color:#b0b0b0;box-sizing:border-box;"></div>
<span style="top:506px;font-size:9.6px;line-height:13px;color:#3a3a3a;left:17.00px;letter-spacing:-0.393px;">1853614</span>
<span style="top:506px;font-size:9.6px;line-height:13px;color:#3a3a3a;left:549.60px;letter-spacing:-0.508px;">200</span>
<span style="top:506px;font-size:9.6px;line-height:13px;color:#3a3a3a;left:714.00px;letter-spacing:-0.664px;">xhr</span>
<span style="top:506px;font-size:9.6px;line-height:13px;color:#3a3a3a;left:878.00px;letter-spacing:-0.292px;text-decoration:underline;text-decoration-color:#555;">vendor.main.js?ver=41600:1</span>
<div style="left:4px;top:524.19px;width:9px;height:11px;background:#ffffff;border:1px solid #c2c2c2;border-bottom-color:#b0b0b0;box-sizing:border-box;"></div>
<span style="top:523px;font-size:9.6px;line-height:13px;color:#3a3a3a;left:17.00px;letter-spacing:-0.393px;">2151475</span>
<span style="top:523px;font-size:9.6px;line-height:13px;color:#3a3a3a;left:549.60px;letter-spacing:-0.508px;">200</span>
<span style="top:523px;font-size:9.6px;line-height:13px;color:#3a3a3a;left:714.00px;letter-spacing:-0.664px;">xhr</span>
<span style="top:523px;font-size:9.6px;line-height:13px;color:#3a3a3a;left:878.00px;letter-spacing:-0.292px;text-decoration:underline;text-decoration-color:#555;">vendor.main.js?ver=41600:1</span>
<div style="left:546px;top:288px;width:1px;height:242px;background:#dcdcdc;"></div>
<div style="left:710.3px;top:288px;width:1px;height:242px;background:#dcdcdc;"></div>
<div style="left:874px;top:288px;width:1px;height:242px;background:#dcdcdc;"></div>
<div style="left:1147px;top:288px;width:1px;height:242px;background:#dcdcdc;"></div>
<div style="left:362.25px;top:35px;width:2px;height:65.1px;background:rgba(0,0,0,.4);border-radius:0 0 2.500px 0;"></div>
<div style="left:66px;top:98.1px;width:296.25px;height:2px;background:rgba(0,0,0,.4);"></div>
<div style="left:60.3px;top:30.2px;width:301.95px;height:67.9px;background:#ffffff;border-left:1px solid #dcdcdc;border-top:1px solid #d0d0d0;box-sizing:border-box;"></div>
<span style="top:38px;font-size:10px;line-height:14px;color:#3c3c3c;left:81.75px;letter-spacing:0.116px;">Обычная перезагрузка</span>
<span style="top:38px;font-size:10px;line-height:14px;color:#6a6a6a;left:302.50px;letter-spacing:0.118px;">Ctrl + R</span>
<span style="top:59px;font-size:10px;line-height:14px;color:#3c3c3c;left:81.75px;letter-spacing:0.028px;">Жесткая перезагрузка</span>
<span style="top:59px;font-size:10px;line-height:14px;color:#6a6a6a;left:268.75px;letter-spacing:0.211px;">Ctrl + Shift + R</span>
<span style="top:80px;font-size:10px;line-height:14px;color:#3c3c3c;left:81.75px;letter-spacing:0.098px;">Очистка кеша и жесткая перезагрузка</span>
</body></html>
